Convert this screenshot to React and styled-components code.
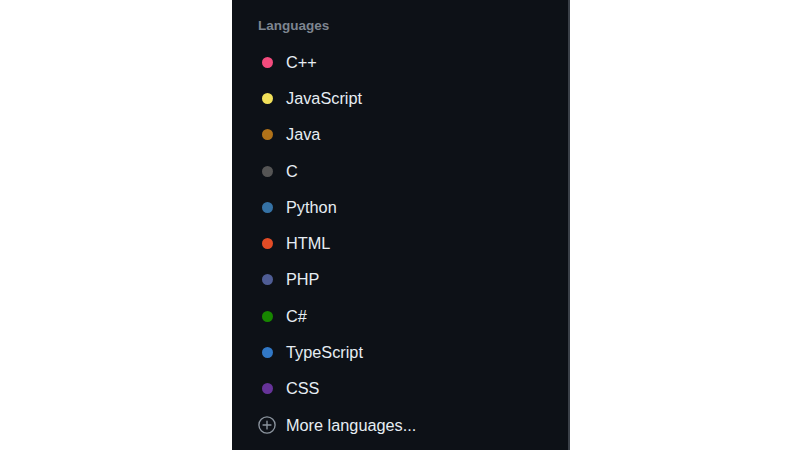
import React from "react";
import styled, { createGlobalStyle } from "styled-components";

const Global = createGlobalStyle`
  html, body { margin: 0; padding: 0; background: #ffffff; }
  body { font-family: "Liberation Sans", Arial, sans-serif; }
`;

const Page = styled.div`
  display: flex;
  height: 450px;
  padding-left: 232px;
`;

const Panel = styled.div`
  width: 338px;
  height: 450px;
  background: #0d1117;
  border-right: 2px solid #3a4048;
  box-sizing: border-box;
  display: flex;
  flex-direction: column;
  padding-left: 26px;
`;

const Heading = styled.div`
  color: #7d8590;
  font-size: 13.5px;
  font-weight: 700;
  height: 18px;
  line-height: 18px;
  margin-top: 17px;
  margin-bottom: 9px;
`;

const List = styled.ul`
  list-style: none;
  margin: 0;
  padding: 0;
`;

const Row = styled.li`
  display: flex;
  align-items: center;
  height: 36.3px;
  color: #e6edf3;
  font-size: 16.3px;
`;

const DotBox = styled.span`
  width: 18px;
  display: flex;
  justify-content: center;
  margin-right: 10px;
`;

const Dot = styled.span`
  width: 11px;
  height: 11px;
  border-radius: 50%;
  background: ${(p) => p.$color};
`;

const languages = [
  ["C++", "#f34b7d"],
  ["JavaScript", "#f1e05a"],
  ["Java", "#b07219"],
  ["C", "#555555"],
  ["Python", "#3572a5"],
  ["HTML", "#e34c26"],
  ["PHP", "#4f5d95"],
  ["C#", "#178600"],
  ["TypeScript", "#3178c6"],
  ["CSS", "#663399"],
];

const PlusCircle = () => (
  <svg width="18" height="18" viewBox="0 0 16 16" fill="none" stroke="#8b949e" strokeWidth="1.2">
    <circle cx="8" cy="8" r="7.2" />
    <path d="M8 4.5v7M4.5 8h7" strokeLinecap="round" />
  </svg>
);

export default function App() {
  return (
    <>
      <Global />
      <Page>
        <Panel>
          <Heading>Languages</Heading>
          <List>
            {languages.map(([name, color]) => (
              <Row key={name}>
                <DotBox>
                  <Dot $color={color} />
                </DotBox>
                {name}
              </Row>
            ))}
            <Row>
              <DotBox>
                <PlusCircle />
              </DotBox>
              More languages...
            </Row>
          </List>
        </Panel>
      </Page>
    </>
  );
}
